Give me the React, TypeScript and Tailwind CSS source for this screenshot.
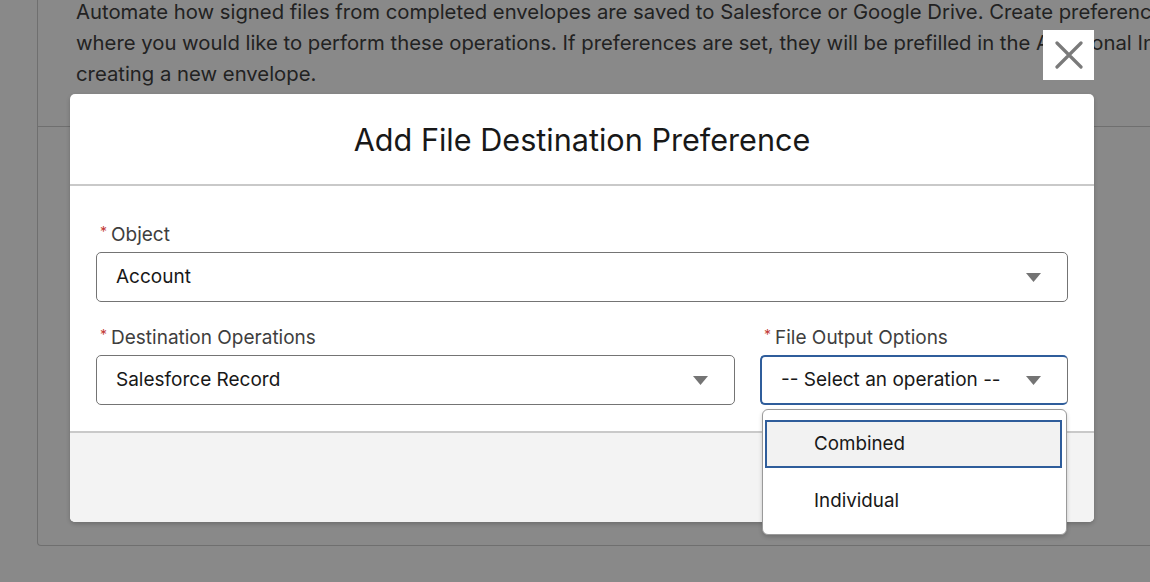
import React from "react";

const font = { fontFamily: 'Inter, "Liberation Sans", sans-serif' };

function Caret() {
  return (
    <svg width="15" height="9" viewBox="0 0 15 9" className="shrink-0">
      <path d="M0 0 H15 L7.5 9 Z" fill="#747474" />
    </svg>
  );
}

function Label({ text }: { text: string }) {
  return (
    <div className="flex items-center h-[24px] pl-[4px] text-[19px] text-[#3e3e3e] leading-none">
      <span className="text-[#c23934] text-[14px] mr-[4px] -mt-[4px]">*</span>
      {text}
    </div>
  );
}

function Select({ value, focused = false }: { value: string; focused?: boolean }) {
  return (
    <div
      className={`h-[50px] flex items-center justify-between pl-[19px] pr-[26px] bg-white rounded-[5px] text-[19px] text-[#181818] ${
        focused
          ? "border-2 border-[#2f5d9b] border-r border-r-[#747474] pl-[18px]"
          : "border border-[#747474]"
      }`}
    >
      <span>{value}</span>
      <Caret />
    </div>
  );
}

export default function App() {
  return (
    <div className="relative w-[1150px] h-[582px] overflow-hidden bg-[#898989]" style={font}>
      {/* background page under overlay */}
      <div className="ml-[37px] -mt-[8px] h-[554px] border-l border-b border-[#6f6f6f] rounded-bl-[4px]">
        <div className="h-[135px] border-b border-[#6f6f6f] pl-[38px] pt-[4px] text-[20.3px] leading-[31px] text-[#222] whitespace-nowrap">
          <p>Automate how signed files from completed envelopes are saved to Salesforce or Google Drive. Create preferences for</p>
          <p>where you would like to perform these operations. If preferences are set, they will be prefilled in the Additional Info</p>
          <p>creating a new envelope.</p>
        </div>
      </div>

      {/* close */}
      <button className="absolute left-[1043px] top-[30px] w-[51px] h-[50px] bg-white flex items-center justify-center">
        <svg width="28" height="28" viewBox="0 0 28 28">
          <path d="M2 2 L26 26 M26 2 L2 26" stroke="#7a7a7a" strokeWidth="3.2" strokeLinecap="round" />
        </svg>
      </button>

      {/* modal */}
      <div className="absolute left-[70px] top-[94px] w-[1024px] h-[428px] bg-white rounded-[5px] shadow-[0_2px_4px_rgba(0,0,0,0.2)] flex flex-col">
        <div className="h-[92px] shrink-0 flex items-center justify-center border-b-2 border-[#c9c9c9] pt-[2px]">
          <h2 className="text-[30.6px] text-[#181818]">Add File Destination Preference</h2>
        </div>

        <div className="px-[26px] pt-[36px] pb-[26px] shrink-0">
          <Label text="Object" />
          <div className="mt-[6px]">
            <Select value="Account" />
          </div>

          <div className="grid grid-cols-[639px_1fr] gap-x-[25px] mt-[23px]">
            <div>
              <Label text="Destination Operations" />
              <div className="mt-[6px]">
                <Select value="Salesforce Record" />
              </div>
            </div>
            <div className="relative">
              <Label text="File Output Options" />
              <div className="mt-[6px]">
                <Select value="-- Select an operation --" focused />
              </div>
              <div className="absolute left-[2px] top-[84px] w-[305px] h-[126px] z-10 bg-white border border-[#9a9a9a] rounded-[6px] shadow-[0_2px_4px_rgba(0,0,0,0.18)] pt-[10px] pl-[2px] pr-[4px]">
                <div className="h-[48px] border-2 border-[#2f5d9b] bg-[#f2f2f2] flex items-center pl-[47px] text-[18.8px] text-[#181818]">
                  Combined
                </div>
                <div className="h-[56px] flex items-center pl-[49px] pt-[10px] text-[18.8px] text-[#181818]">
                  Individual
                </div>
              </div>
            </div>
          </div>
        </div>

        <div className="flex-1 bg-[#f3f3f3] border-t-2 border-[#c9c9c9] rounded-b-[5px]" />
      </div>
    </div>
  );
}
